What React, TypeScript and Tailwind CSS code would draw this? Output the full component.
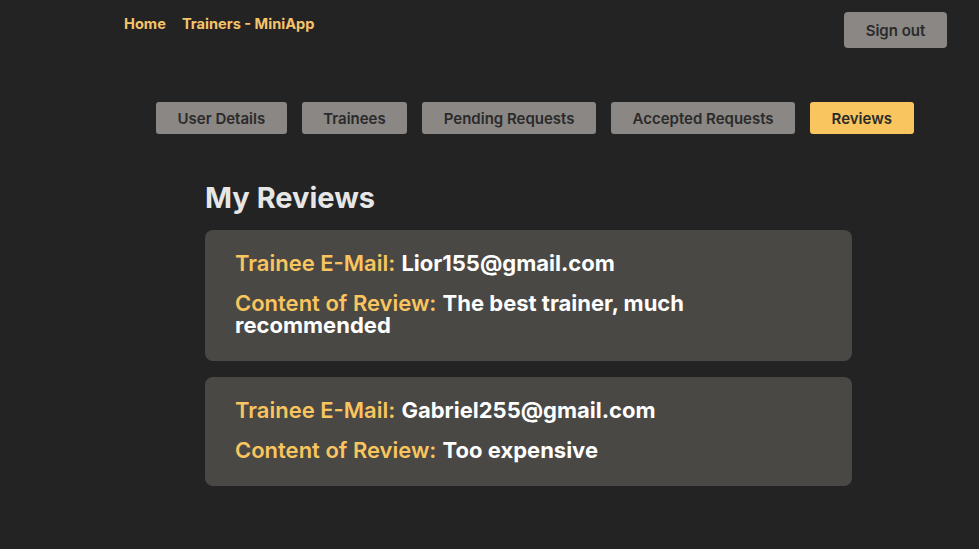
import React from "react";

const tabs = [
  { label: "User Details", active: false },
  { label: "Trainees", active: false },
  { label: "Pending Requests", active: false },
  { label: "Accepted Requests", active: false },
  { label: "Reviews", active: true },
];

const reviews = [
  { email: "Lior155@gmail.com", content: "The best trainer, much recommended" },
  { email: "Gabriel255@gmail.com", content: "Too expensive" },
];

export default function App() {
  return (
    <div
      className="min-h-screen bg-[#232323] pb-10"
      style={{ fontFamily: "Inter, 'Noto Sans', sans-serif" }}
    >
      {/* Top bar */}
      <header className="flex items-start justify-between pl-[124px] pr-[32px] pt-3">
        <nav className="flex gap-4 pt-[3px] text-[14.6px] font-bold leading-[18px] text-[#f5c36b]">
          <a href="#">Home</a>
          <a href="#">Trainers - MiniApp</a>
        </nav>
        <button className="h-9 w-[103px] rounded-[4px] bg-[#8a8784] pt-[3px] text-[15px] font-semibold text-[#2a2a2a]">
          Sign out
        </button>
      </header>

      {/* Tabs */}
      <div className="ml-[156px] mt-[54px] flex gap-[15px]">
        {tabs.map((t) => (
          <button
            key={t.label}
            className={
              t.active
                ? "h-8 rounded-[3px] bg-[#f8c55e] px-[21.5px] pt-[2px] text-[15px] font-semibold text-[#2a2a2a]"
                : "h-8 rounded-[3px] bg-[#8a8784] px-[21.5px] pt-[2px] text-[15px] font-semibold text-[#2a2a2a]"
            }
          >
            {t.label}
          </button>
        ))}
      </div>

      {/* Reviews */}
      <main className="ml-[205px] mt-[47px] w-[647px]">
        <h2 className="mb-[15px] text-[29px] font-bold leading-[34px] text-[#e6e6e6]">
          My Reviews
        </h2>
        <div className="flex flex-col gap-4">
          {reviews.map((r) => (
            <div
              key={r.email}
              className="flex flex-col gap-[18px] rounded-lg bg-[#4a4845] px-[30px] pb-[25px] pt-[22px] text-[22px] leading-[22px]"
            >
              <p>
                <span className="font-semibold text-[#f8c55e]">Trainee E-Mail:</span>{" "}
                <span className="font-bold text-white">{r.email}</span>
              </p>
              <p>
                <span className="font-semibold text-[#f8c55e]">Content of Review:</span>{" "}
                <span className="font-bold text-white">{r.content}</span>
              </p>
            </div>
          ))}
        </div>
      </main>
    </div>
  );
}
